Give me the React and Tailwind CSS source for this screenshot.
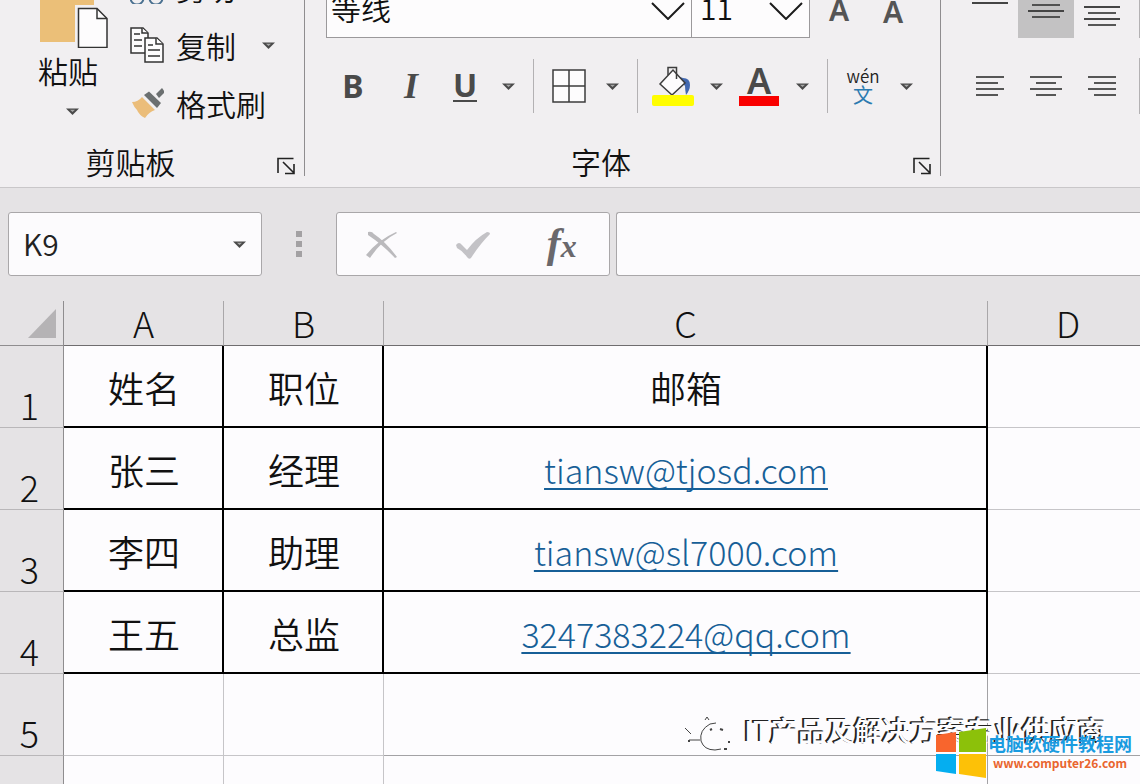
import { useState } from "react";

const rows = [
  { name: "姓名", title: "职位", email: "邮箱", header: true },
  { name: "张三", title: "经理", email: "tiansw@tjosd.com" },
  { name: "李四", title: "助理", email: "tiansw@sl7000.com" },
  { name: "王五", title: "总监", email: "3247383224@qq.com" },
];

const Caret = () => (
  <svg width="13" height="7" viewBox="0 0 13 7" aria-hidden="true">
    <path d="M0 0.500h13L6.500 7z" fill="#4a4a4a" />
    <path d="M4 1.800h5L6.500 4z" fill="#a8a8a8" />
  </svg>
);

const Chevron = () => (
  <svg width="34" height="18" viewBox="0 0 34 18" fill="none" aria-hidden="true">
    <path d="M1 1l16 16L33 1" stroke="#1c1c1c" strokeWidth="2" />
  </svg>
);

const CaretButton = ({ label }) => (
  <button aria-label={label} className="flex h-14 w-9 items-center justify-center">
    <Caret />
  </button>
);

const ToolButton = ({ label, children }) => (
  <button aria-label={label} className="flex h-14 w-[50px] items-center justify-center">
    {children}
  </button>
);

const Divider = () => <div className="ml-[7px] mr-[10px] h-[54px] w-px bg-[#b3b1b3]" />;

// lines: [x1, x2, y]
const AlignIcon = ({ lines }) => (
  <svg width="40" height="56" viewBox="0 0 40 56" aria-hidden="true">
    {lines.map(([x1, x2, y]) => (
      <path key={y} d={`M${x1} ${y}H${x2}`} stroke="#444" strokeWidth="1.8" />
    ))}
  </svg>
);

const GroupLabel = ({ children }) => (
  <div className="flex h-[42px] items-end pb-px">
    <div className="flex-1 pr-4 text-center text-[30px] leading-[28px]">{children}</div>
    <button aria-label="更多选项" className="mr-[9px] w-[18px]">
      <svg width="18" height="18" viewBox="0 0 18 18" fill="none" stroke="#222" strokeWidth="1.6" aria-hidden="true">
        <path d="M1 16V1.500H16.500M6 5l10.500 10.500M17 7v9.500H8" />
      </svg>
    </button>
  </div>
);

const ClipboardGroup = () => (
  <section className="flex w-[305px] shrink-0 flex-col justify-end border-r border-[#8f8d8f]">
    <div className="flex items-end gap-[22px] pl-[38px]">
      <button className="flex h-[134px] w-[70px] flex-col items-start">
        <svg width="70" height="70" viewBox="0 0 70 70" className="-mt-[22px] shrink-0" aria-hidden="true">
          <path d="M2 0h54v64H2z" fill="#ebbf78" />
          <path d="M37 27h36v44H37z" fill="#f1eff1" />
          <path d="M40.500 30.500H59l10 10v29H40.500z" fill="#fdfcfd" stroke="#333" strokeWidth="1.500" />
          <path d="M59 30.500v10h10" fill="none" stroke="#333" strokeWidth="1.500" />
        </svg>
        <span className="text-[30px] leading-[44px]">粘贴</span>
        <span className="ml-7 mt-4 flex">
          <Caret />
        </span>
      </button>
      <div className="flex-1 pb-0.5">
        <button className="flex h-[58px] w-full items-center">
          <svg width="34" height="34" viewBox="0 0 34 34" fill="none" aria-hidden="true">
            <g stroke="#4a7090" strokeWidth="2">
              <circle cx="7" cy="28" r="6.500" />
              <circle cx="26" cy="28" r="6.500" />
            </g>
            <path d="M11 22L24 0M22 22L9 0" stroke="#444" strokeWidth="2" />
          </svg>
          <span className="ml-3 text-[30px] leading-[46px]">剪切</span>
        </button>
        <button className="flex h-[58px] w-full items-center">
          <svg width="34" height="36" viewBox="0 0 34 36" fill="#fdfcfd" stroke="#333" strokeWidth="1.500" aria-hidden="true">
            <path d="M1 1h12l5 5v20H1z" />
            <path d="M12 1v5h6M4 7h6M4 13h8M4 19h8" />
            <path d="M15 11h12l6 6v18H15z" />
            <path d="M26 11v6h7M18 18h5M18 23h12M18 29h12" />
          </svg>
          <span className="ml-3 text-[30px] leading-[46px]">复制</span>
          <span className="ml-[26px]">
            <Caret />
          </span>
        </button>
        <button className="flex h-[58px] w-full items-center">
          <svg width="34" height="30" viewBox="0 0 34 30" aria-hidden="true">
            <path d="M2 14q6 0 10-5l13 13q-6 2-10 8Q9 27 7 22q-3-3-5-8z" fill="#ebbd7a" />
            <path d="M14 7l5-3.500L31 15l-4 5z" fill="#6b6f70" />
            <path d="M26 6l6-6 3 4-6 6z" fill="#6b6f70" />
          </svg>
          <span className="ml-3 text-[30px] leading-[46px]">格式刷</span>
        </button>
      </div>
    </div>
    <GroupLabel>剪贴板</GroupLabel>
  </section>
);

const FontGroup = () => (
  <section className="flex w-[636px] shrink-0 flex-col justify-end border-r border-[#8f8d8f]">
    <div className="flex h-14 pl-[21px]">
      <div className="relative w-[366px]">
        <select
          aria-label="字体"
          className="h-full w-full appearance-none border border-[#9b999b] bg-[#fdfcfd] pb-1.5 pl-1 text-[30px] leading-[46px]"
        >
          <option>等线</option>
        </select>
        <span className="pointer-events-none absolute right-[7px] top-5">
          <Chevron />
        </span>
      </div>
      <div className="relative w-[118px]">
        <select
          aria-label="字号"
          className="h-full w-full appearance-none border border-l-0 border-[#9b999b] bg-[#fdfcfd] pb-1.5 pl-2 text-[30px] leading-[46px]"
        >
          <option>11</option>
        </select>
        <span className="pointer-events-none absolute right-[7px] top-5">
          <Chevron />
        </span>
      </div>
      <button aria-label="增大字号" className="ml-3 w-[34px] text-center font-['Noto_Sans'] text-[30px] font-semibold leading-[56px] text-[#555]">
        A
      </button>
      <button aria-label="减小字号" className="ml-5 w-[34px] pt-0.5 text-center font-['Noto_Sans'] text-[30px] font-semibold leading-[56px] text-[#555]">
        A
      </button>
    </div>
    <div className="flex h-24 items-center pl-[19px] text-[#4a4a4a]">
      <button className="h-14 w-[58px] font-['Noto_Sans'] text-[32px] font-bold leading-[56px]">B</button>
      <button className="h-14 w-[58px] font-['Liberation_Serif'] text-[36px] font-bold italic leading-[56px]">I</button>
      <ToolButton label="下划线">
        <span className="border-b-2 border-[#4a4a4a] font-['Noto_Sans'] text-[32px] font-bold leading-[30px]">U</span>
      </ToolButton>
      <CaretButton label="下划线选项" />
      <Divider />
      <ToolButton label="边框">
        <svg width="34" height="34" viewBox="0 0 34 34" fill="#fdfcfd" stroke="#3c3c3c" strokeWidth="1.500" aria-hidden="true">
          <path d="M1 1h32v32H1zM17 1v32M1 17h32" />
        </svg>
      </ToolButton>
      <CaretButton label="边框选项" />
      <Divider />
      <ToolButton label="填充颜色">
        <svg width="42" height="40" viewBox="0 0 42 40" fill="none" aria-hidden="true">
          <path d="M25 10l6 2q7 0 7 7 0 5-4 10-1-6-1-9z" fill="#4268b0" />
          <path d="M8 18L21 4l12 13-13 12z" fill="#fdfcfd" stroke="#3c3c3c" strokeWidth="1.500" />
          <path d="M16 9V1.500h8.500V13" stroke="#3c3c3c" strokeWidth="1.500" />
          <rect x="0" y="29" width="42" height="11" rx="2" fill="#fffd00" />
        </svg>
      </ToolButton>
      <CaretButton label="填充颜色选项" />
      <ToolButton label="字体颜色">
        <span className="w-10 border-b-[10px] border-[#f90000] text-center font-['Noto_Sans'] text-[36px] font-semibold leading-[30px]">A</span>
      </ToolButton>
      <CaretButton label="字体颜色选项" />
      <Divider />
      <ToolButton label="拼音指南">
        <span className="flex flex-col items-center">
          <span className="text-[17px] leading-[18px] text-[#222]">wén</span>
          <span className="text-[20px] font-normal leading-[20px] text-[#2b7bb0]">文</span>
        </span>
      </ToolButton>
      <CaretButton label="拼音指南选项" />
    </div>
    <GroupLabel>字体</GroupLabel>
  </section>
);

const AlignGroup = () => (
  <section className="flex flex-1 flex-col justify-end pb-[42px] pl-[21px]">
    <div className="grid h-14 w-[178px] grid-cols-[56px_56px_56px] border-r border-[#b3b1b3]">
      <button aria-label="顶端对齐" className="flex justify-center">
        <AlignIcon lines={[[2, 38, 9], [6, 34, 15], [2, 38, 21]]} />
      </button>
      <button aria-label="垂直居中" className="flex justify-center bg-[#c3c2c3]">
        <AlignIcon lines={[[6, 34, 23], [2, 38, 29], [6, 34, 35]]} />
      </button>
      <button aria-label="底端对齐" className="flex justify-center">
        <AlignIcon lines={[[2, 38, 25], [6, 34, 31], [2, 38, 37], [6, 34, 43]]} />
      </button>
    </div>
    <div className="flex h-24 items-center">
      <div className="grid h-14 w-[178px] grid-cols-[56px_56px_56px] border-r border-[#b3b1b3]">
        <button aria-label="左对齐" className="flex justify-center">
          <AlignIcon lines={[[6, 34, 19], [6, 28, 25], [6, 34, 31], [6, 28, 37]]} />
        </button>
        <button aria-label="居中" className="flex justify-center">
          <AlignIcon lines={[[4, 36, 19], [10, 30, 25], [4, 36, 31], [10, 30, 37]]} />
        </button>
        <button aria-label="右对齐" className="flex justify-center">
          <AlignIcon lines={[[6, 34, 19], [12, 34, 25], [6, 34, 31], [12, 34, 37]]} />
        </button>
      </div>
    </div>
  </section>
);

const FormulaBar = () => {
  const [cell, setCell] = useState("K9");
  const [formula, setFormula] = useState("");

  return (
    <div className="flex h-[113px] pb-[25px] pl-2 pt-6 font-[350]">
      <div className="flex w-[254px] shrink-0 items-center rounded-[3px] border border-[#a9a7a9] bg-[#fcfbfd] pr-[15px]">
        <input
          aria-label="名称框"
          value={cell}
          onChange={(e) => setCell(e.target.value)}
          className="h-full min-w-0 flex-1 pb-0.5 pl-[14px] text-[30px] text-[#222] outline-none"
        />
        <button aria-label="选择名称">
          <Caret />
        </button>
      </div>
      <div className="flex w-[74px] shrink-0 flex-col items-center justify-center gap-1">
        <span className="h-[6px] w-[6px] bg-[#a3a1a3]" />
        <span className="h-[6px] w-[6px] bg-[#a3a1a3]" />
        <span className="h-[6px] w-[6px] bg-[#a3a1a3]" />
      </div>
      <div className="grid w-[274px] shrink-0 grid-cols-3 rounded-[3px] border border-[#a9a7a9] bg-[#fcfbfd]">
        <button aria-label="取消" className="flex items-center justify-center">
          <svg width="32" height="28" viewBox="0 0 32 28" fill="#bbbabd" aria-hidden="true">
            <path d="M2 1q4-1 6 2 12 8 23 23l-2 1Q17 14 2 4z" />
            <path d="M31 2Q15 10 4 27L0 24Q12 9 30 1z" />
          </svg>
        </button>
        <button aria-label="输入" className="flex items-center justify-center">
          <svg width="34" height="28" viewBox="0 0 34 28" fill="#c3c2c6" aria-hidden="true">
            <path d="M0 14q3-4 6 0l5 5Q20 7 31 1q3 0 3 2-10 10-19 24-2 2-4-1Q7 20 1 17z" />
          </svg>
        </button>
        <button aria-label="插入函数" className="pr-1 font-['Liberation_Serif'] text-[42px] font-bold italic leading-[60px] text-[#6a686c]">
          f<span className="text-[32px]">x</span>
        </button>
      </div>
      <input
        aria-label="编辑栏"
        value={formula}
        onChange={(e) => setFormula(e.target.value)}
        className="ml-[6px] min-w-0 flex-1 rounded-l-[3px] border border-r-0 border-[#a9a7a9] bg-[#fcfbfd] px-3 text-[30px] outline-none"
      />
    </div>
  );
};

const RowHead = ({ children }) => (
  <th className="border-b border-r border-b-[#b9b7b9] border-r-[#8f8d8f] bg-[#e5e3e5] pb-[3px] pr-1 align-bottom text-[36px] font-light leading-[40px]">
    {children}
  </th>
);

const Sheet = () => (
  <table className="w-full table-fixed border-separate border-spacing-0 text-center text-[36px] font-[350]">
    <colgroup>
      <col className="w-16" />
      <col className="w-40" />
      <col className="w-40" />
      <col className="w-[604px]" />
      <col />
    </colgroup>
    <thead>
      <tr className="h-[45px] bg-[#e5e3e5] leading-[42px]">
        <th aria-label="全选" className="border-b border-r border-[#8f8d8f] p-0">
          <svg width="28" height="29" viewBox="0 0 28 29" className="ml-7" aria-hidden="true">
            <path d="M28 0v29H0z" fill="#b5b3b5" />
          </svg>
        </th>
        {["A", "B", "C"].map((col) => (
          <th key={col} className="border-b border-r border-b-[#6f6d6f] border-r-[#a9a7a9] p-0 pb-0.5 font-light">
            {col}
          </th>
        ))}
        <th className="border-b border-[#6f6d6f] p-0 pb-0.5 pl-2 font-light">D</th>
      </tr>
    </thead>
    <tbody className="bg-[#fdfcfe] leading-[44px]">
      {rows.map((row, i) => (
        <tr key={row.name} className="h-[82px]">
          <RowHead>{i + 1}</RowHead>
          <td className="border-b-2 border-r-2 border-black p-0 pl-0.5 pt-0.5">{row.name}</td>
          <td className="border-b-2 border-r-2 border-black p-0 pl-0.5 pt-0.5">{row.title}</td>
          <td className="border-b-2 border-r-2 border-black p-0 pl-0.5 pt-0.5">
            {row.header ? (
              row.email
            ) : (
              <a
                href={`mailto:${row.email}`}
                className="text-[34px] font-light leading-[44px] text-[#175f97] underline decoration-2 underline-offset-4 [text-decoration-skip-ink:none]"
              >
                {row.email}
              </a>
            )}
          </td>
          <td className="border-b border-[#c6c5c8] p-0" />
        </tr>
      ))}
      {[5, 6].map((n) => (
        <tr key={n} className="h-[82px]">
          <RowHead>{n}</RowHead>
          <td className="border-b border-r border-[#c6c5c8] p-0" />
          <td className="border-b border-r border-[#c6c5c8] p-0" />
          <td className="border-b border-r border-[#a3a2a5] p-0" />
          <td className="border-b border-[#a3a2a5] p-0" />
        </tr>
      ))}
    </tbody>
  </table>
);

const Watermark = () => (
  <div className="absolute bottom-8 right-[34px] flex items-center gap-3">
    <svg width="48" height="36" viewBox="0 0 48 36" fill="none" stroke="#444" strokeWidth="1" className="mt-2" aria-hidden="true">
      <path d="M1 12l6 6M5 24h11M17 25Q15 14 26 8l6-1M17 25q3 9 14 9l6-1M21 4l2-3 2 3" />
      <path d="M26 14l2-1M36 13l3 1M45 25v2M40 33h3M5 24v2" strokeWidth="2" />
    </svg>
    <span className="text-[28px] font-medium leading-[34px] text-[#fdfcfe] [text-shadow:-1px_-1px_0_#222,-2px_-1px_0_#222]">IT产品及解决方案专业供应商</span>
  </div>
);

const SiteLogo = () => (
  <div className="absolute bottom-[6px] right-[10px] flex items-center gap-1">
    <svg width="50" height="50" viewBox="0 0 50 50" aria-hidden="true">
      <path d="M0 7l20-3v20H0z" fill="#f8652d" />
      <path d="M23 4l27-4v24H23z" fill="#8cc10a" />
      <path d="M0 26h20v20L0 43z" fill="#05aef0" />
      <path d="M23 26h27v24l-27-4z" fill="#fdc107" />
    </svg>
    <div className="flex w-[140px] flex-col items-center font-bold">
      <span className="whitespace-nowrap text-[18px] leading-[20px] text-[#1a9be0]">电脑软硬件教程网</span>
      <a href="#home" className="text-[12px] leading-[20px] text-[#e9652f]">
        www.computer26.com
      </a>
    </div>
  </div>
);

export default function App() {
  return (
    <main className="relative h-screen overflow-hidden bg-[#e5e3e5] font-['Noto_Sans_CJK_SC',sans-serif] text-[#111]">
      <header className="flex h-[188px] items-end overflow-hidden border-b border-[#c9c7c9] bg-[#f1eff1] pb-[11px]">
        <div className="flex w-full font-[350]">
          <ClipboardGroup />
          <FontGroup />
          <AlignGroup />
        </div>
      </header>
      <FormulaBar />
      <Sheet />
      <Watermark />
      <SiteLogo />
    </main>
  );
}
